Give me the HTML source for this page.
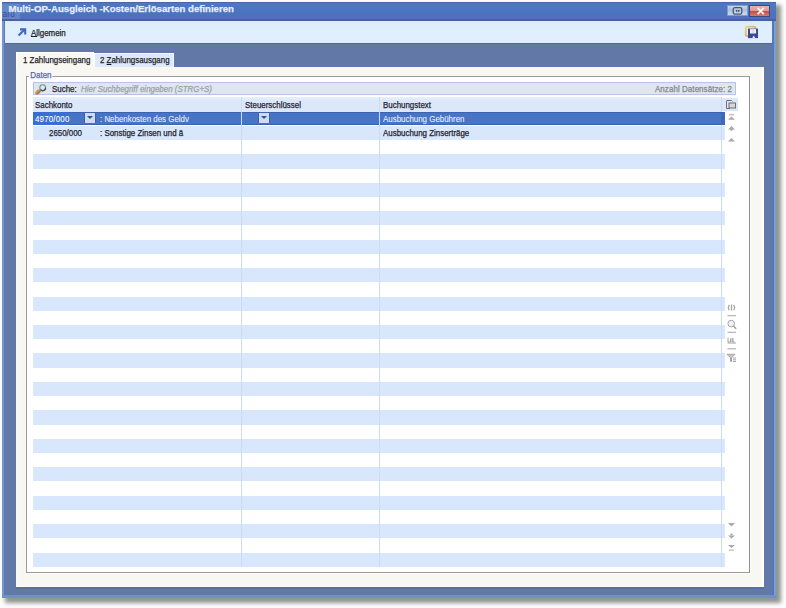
<!DOCTYPE html>
<html><head><meta charset="utf-8">
<style>
*{margin:0;padding:0;box-sizing:border-box}
html,body{width:786px;height:608px;overflow:hidden;background:#fdfdfd;font-family:"Liberation Sans",sans-serif;font-size:8px;color:#1c1c28}
.a{position:absolute}
.t{position:absolute;white-space:nowrap;line-height:10px;font-size:8.8px;transform:scaleX(.9);transform-origin:0 0;-webkit-text-stroke:.25px currentColor}
#win{left:2px;top:2px;width:774.2px;height:595.7px;background:#6279a8;box-shadow:4px 4px 4px 1px rgba(40,45,35,.5)}
#lb{left:2px;top:2px;width:2.1px;height:595.7px;background:#7296d6}
#rb{left:771.9px;top:2px;width:4.3px;height:595.7px;background:linear-gradient(90deg,#5079c0 0,#5079c0 42%,#7d9cc8 42%)}
#bb{left:2px;top:594.7px;width:774.2px;height:3px;background:#7090cc}
#title{left:2px;top:2px;width:774.2px;height:18.8px;background:linear-gradient(#4f76c0,#4d77c2 20%,#4c72bc 70%,#556fbe 85%,#4a6098 92%);border-top:1px solid #4a68a8}
#ttext{left:8.4px;top:2.9px;font-size:9.6px;line-height:12px;font-weight:bold;color:#e8eef9;letter-spacing:0;transform:none}
#tb{left:5px;top:20.8px;width:767px;height:23.2px;background:linear-gradient(#dbebfa,#e0effd 30%,#dfedfc);border-bottom:1px solid #4e68a0}
#btnr{left:726.9px;top:5.2px;width:21.6px;height:11.1px;background:linear-gradient(#c3d6f0,#aabdd8 50%,#b6c8e4 51%,#c7d8f0);border:1px solid #7f9dcc}
#btnc{left:749.4px;top:5.2px;width:21px;height:11.4px;background:linear-gradient(#e6b2aa,#dc9c92 45%,#c85045 55%,#d07a70);border:1px solid #34488a}
#tab2{left:93.8px;top:53.3px;width:79.8px;height:13.3px;background:#dde9f9;border:1px solid #f4f8fd;border-bottom:none;border-left-color:#fbfcfe}
#cream{left:16px;top:66.5px;width:747.7px;height:520px;background:#f9f7f2;border:2px solid #f6fafb;border-top:none;border-bottom:1px solid #fff;border-right-color:#fff;box-shadow:0 2px 0 #5a6fa0}
#tab1{left:16px;top:51.9px;width:77.8px;height:15px;background:#f9f7f2;border:1px solid #fff;border-bottom:none}
#grp{left:26.2px;top:76px;width:723.6px;height:497px;background:#fff;border:1px solid #9b9b9b;border-right-color:#8e8e8e;border-bottom-color:#9e9b96;box-shadow:1px 1px 0 #fff}
#daten{left:28.5px;top:70px;padding:0 1.5px;background:#f9f7f2;color:#4a6ab8}
#search{left:33.1px;top:82.2px;width:702.8px;height:13.2px;background:#dfe5f1;border:1px solid #b4c4e2}
#hdr{left:33.1px;top:96.8px;width:688px;height:14.9px;background:linear-gradient(#e6effb,#dce8fa 25%)}
#ibox{left:722px;top:97.7px;width:15.7px;height:13px;background:#dce8fa}
.row{position:absolute;left:33.1px;width:691.7px;height:14.22px}
.odd{background:#d9e7fc}
.sel{background:#4774c5;height:13px;box-shadow:inset 0 1px 0 #3d62b0,inset 0 -1px 0 #3d62b0}
.vl{position:absolute;top:96.5px;width:1px;height:470.5px;background:#c9dbf6}
.hd{color:#222230;top:99.7px}
.r1{top:113.8px;color:#e8eefa;-webkit-text-stroke:.1px currentColor}
.r2{top:127.6px;color:#1c1c28}
.dd{position:absolute;width:12px;height:10.4px;background:#cddcf6;top:112.7px;border-left:1px solid #3d5ea8;border-right:1px solid #3d5ea8}
.dd:after{content:"";position:absolute;left:1.9px;top:3.8px;border-left:3px solid transparent;border-right:3px solid transparent;border-top:3.4px solid #32508a}
.ic{position:absolute}
</style></head><body>
<div id="win" class="a"></div>
<div id="lb" class="a"></div>
<div id="rb" class="a"></div>
<div id="bb" class="a"></div>
<div id="title" class="a"></div>
<div class="a" style="left:2px;top:4px;width:18px;height:15px;background:rgba(150,180,230,.3)"></div>
<div class="a" style="left:2.5px;top:9.6px;font-size:8.5px;line-height:9px;color:rgba(45,75,150,.95);white-space:nowrap;letter-spacing:.1px">ard</div>
<div id="ttext" class="t">Multi-OP-Ausgleich -Kosten/Erlösarten definieren</div>
<div id="btnr" class="a"></div>
<div id="btnc" class="a"></div>
<svg class="ic" style="left:726px;top:4px" width="48" height="14" viewBox="0 0 48 14">
<rect x="7.2" y="3.7" width="8.6" height="6.4" rx="1.6" fill="none" stroke="#4f5868" stroke-width="1.3"/>
<rect x="10" y="6.2" width="1.4" height="1.4" fill="#333"/><rect x="12" y="6.2" width="1.4" height="1.4" fill="#333"/>
<path d="M31.6 3.9 L37.8 10.1 M37.8 3.9 L31.6 10.1" stroke="#f6f4f4" stroke-width="1.9"/>
</svg>
<div id="tb" class="a"></div>
<svg class="ic" style="left:17px;top:28px" width="10" height="9" viewBox="0 0 10 9"><path d="M1.6 7.6 L7.6 1.6" stroke="#3d68bc" stroke-width="2.1" fill="none"/><path d="M3 1.4 H8.2 V6.6" stroke="#3d68bc" stroke-width="2.1" fill="none" stroke-linejoin="miter"/></svg>
<div class="t" style="left:31.2px;top:28.4px;color:#202020">Allgemein</div>
<div class="a" style="left:31.3px;top:36px;width:6px;height:1px;background:#202020"></div>
<svg class="ic" style="left:744px;top:25px" width="16" height="15" viewBox="0 0 16 15">
<defs><linearGradient id="gd" x1="0" y1="0" x2="1" y2="1"><stop offset="0" stop-color="#ecd08c"/><stop offset="1" stop-color="#c99a48"/></linearGradient></defs>
<rect x="1.7" y="1.7" width="9.8" height="9.4" rx="1.6" fill="#f1ead8" stroke="url(#gd)" stroke-width="1.7"/>
<path d="M4 3.6 H14 V13.1 H4 Z" fill="#3b489a"/>
<rect x="6" y="4.1" width="6" height="4.4" fill="#eef0f6"/><rect x="8.6" y="4.6" width=".8" height="3.2" fill="#b8bccc"/>
<path d="M8.3 13.1 L9.7 10.4 L11.1 13.1 Z" fill="#eef0f6"/>
</svg>
<div id="tab2" class="a"></div>
<div class="t" style="left:100px;top:54.8px">2 <u>Z</u>ahlungsausgang</div>
<div id="cream" class="a"></div>
<div id="tab1" class="a"></div>
<div class="t" style="left:23.3px;top:55px">1 Zahlungseingang</div>
<div id="grp" class="a"></div>
<div id="daten" class="t">Daten</div>
<div id="search" class="a"></div>
<div class="t" style="left:51.6px;top:84px;color:#262626">Suche:</div>
<div class="t" style="left:81.4px;top:84px;color:#9aa0aa;font-style:italic">Hier Suchbegriff eingeben (STRG+S)</div>
<div class="t" style="left:654.6px;top:84px;color:#80868f;letter-spacing:.1px">Anzahl Datensätze: 2</div>
<svg class="ic" style="left:34px;top:83px" width="13" height="12" viewBox="0 0 13 12">
<defs><linearGradient id="hg" x1="0" y1="0" x2="0" y2="1"><stop offset="0" stop-color="#e0a070"/><stop offset="1" stop-color="#a8683c"/></linearGradient></defs>
<ellipse cx="3.9" cy="9" rx="3.1" ry="2.1" transform="rotate(-40 3.9 9)" fill="url(#hg)"/>
<circle cx="8.7" cy="4.7" r="2.9" fill="#cdeef8" stroke="#7d8896" stroke-width="1.1"/>
<path d="M11.6 4.7 A2.9 2.9 0 0 1 6.6 6.8" stroke="#444c58" stroke-width="1.3" fill="none"/>
</svg>
<div id="hdr" class="a"></div>
<div id="ibox" class="a"></div>
<div class="row sel" style="top:111.70px"></div>
<div class="row odd" style="top:125.92px"></div>
<div class="row" style="top:140.14px"></div>
<div class="row odd" style="top:154.36px"></div>
<div class="row" style="top:168.58px"></div>
<div class="row odd" style="top:182.80px"></div>
<div class="row" style="top:197.02px"></div>
<div class="row odd" style="top:211.24px"></div>
<div class="row" style="top:225.46px"></div>
<div class="row odd" style="top:239.68px"></div>
<div class="row" style="top:253.90px"></div>
<div class="row odd" style="top:268.12px"></div>
<div class="row" style="top:282.34px"></div>
<div class="row odd" style="top:296.56px"></div>
<div class="row" style="top:310.78px"></div>
<div class="row odd" style="top:325.00px"></div>
<div class="row" style="top:339.22px"></div>
<div class="row odd" style="top:353.44px"></div>
<div class="row" style="top:367.66px"></div>
<div class="row odd" style="top:381.88px"></div>
<div class="row" style="top:396.10px"></div>
<div class="row odd" style="top:410.32px"></div>
<div class="row" style="top:424.54px"></div>
<div class="row odd" style="top:438.76px"></div>
<div class="row" style="top:452.98px"></div>
<div class="row odd" style="top:467.20px"></div>
<div class="row" style="top:481.42px"></div>
<div class="row odd" style="top:495.64px"></div>
<div class="row" style="top:509.86px"></div>
<div class="row odd" style="top:524.08px"></div>
<div class="row" style="top:538.30px"></div>
<div class="row odd" style="top:552.52px"></div>
<svg class="ic" style="left:722px;top:96px" width="18" height="460" viewBox="0 0 18 460">
<g fill="none" stroke="#6e6e6e" stroke-width="1">
<path d="M5 4.5 H9.5 L10.5 5.5 M4.5 4.5 V12.5 H8"/>
<rect x="7" y="7" width="6.5" height="5" fill="#d8d8d8"/>
</g>
<g fill="#a9a9a9">
<rect x="7" y="18.3" width="5" height="1"/><path d="M6 23.8 L9.5 20.4 L13 23.8 Z"/>
<path d="M6 33.4 L9.5 30 L13 33.4 Z"/><rect x="8.3" y="33" width="2.4" height="1.6"/>
<path d="M6 45.6 L9.5 42 L13 45.6 Z"/>
</g>
<g fill="none" stroke="#a4a4a4" stroke-width="1">
<path d="M7.2 208.8 Q5.6 211.5 7.2 214.3 M11.8 208.8 Q13.4 211.5 11.8 214.3 M9.5 208.5 V214.5" stroke-width="1.3"/>
<path d="M5.5 219.7 H14"/>
<circle cx="9.2" cy="227.6" r="3.3" fill="#f2f2f2"/><path d="M11.5 230 L14.2 232.8" stroke-width="1.6"/>
<path d="M5.5 236.3 H14"/>
<path d="M6 241.5 V246 H8 M8.5 242.5 V246 M10 242 V246 H12.5 M11 242 V246 M5.5 247 H14"/>
<path d="M5.5 252.8 H14"/>
<path d="M5 258.3 H13 L9.5 261.8 V265.5 H8.5 V261.8 Z" fill="#c8c8c8"/>
<path d="M11 262 H14 M11 263.8 H14 M11 265.5 H14"/>
</g>
<g fill="#a9a9a9">
<path d="M6 427 L9.5 430.6 L13 427 Z"/>
<rect x="8.3" y="437.6" width="2.4" height="1.8"/><path d="M6 439.6 L9.5 442.6 L13 439.6 Z"/>
<path d="M6 449.1 L9.5 452 L13 449.1 Z"/><rect x="7" y="453.6" width="5" height="1"/>
</g>
</svg>
<div class="vl" style="left:241px"></div>
<div class="vl" style="left:379px"></div>
<div class="vl" style="left:721px"></div>
<div class="a" style="left:721px;top:111.7px;width:3.8px;height:13.2px;background:#3f69b9"></div>
<div class="t hd" style="left:34.7px">Sachkonto</div>
<div class="t hd" style="left:245px">Steuerschlüssel</div>
<div class="t hd" style="left:383px">Buchungstext</div>
<div class="a" style="left:33.1px;top:112px;width:36.3px;height:12.6px;background:#3b6ed4"></div>
<div class="t r1" style="left:34.8px;color:#fff;letter-spacing:.2px">4970/000</div>
<div class="dd" style="left:83.9px"></div>
<div class="t r1" style="left:99.7px">: Nebenkosten des Geldv</div>
<div class="dd" style="left:257.8px"></div>
<div class="t r1" style="left:383px">Ausbuchung Gebühren</div>
<div class="t r2" style="left:49px">2650/000</div>
<div class="t r2" style="left:99.7px">: Sonstige Zinsen und ä</div>
<div class="t r2" style="left:383px">Ausbuchung Zinserträge</div>
</body></html>
